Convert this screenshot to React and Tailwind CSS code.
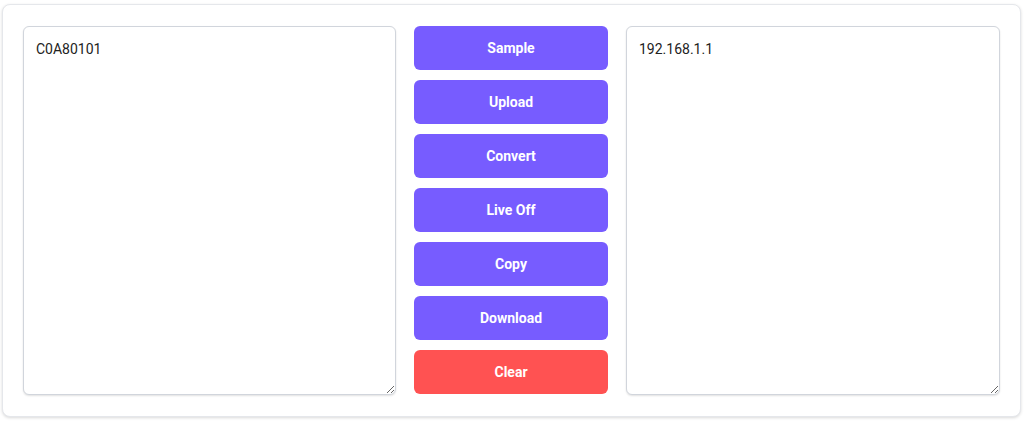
const BUTTONS = [
  { label: 'Sample', tone: 'purple' },
  { label: 'Upload', tone: 'purple' },
  { label: 'Convert', tone: 'purple' },
  { label: 'Live Off', tone: 'purple' },
  { label: 'Copy', tone: 'purple' },
  { label: 'Download', tone: 'purple' },
  { label: 'Clear', tone: 'red' },
];

export default function App() {
  return (
    <div className="w-[1024px] h-[421px] bg-white pt-1 px-0.5" style={{ fontFamily: 'Roboto, "Liberation Sans", sans-serif' }}>
      <div className="h-[413px] w-[1019px] rounded-lg border border-gray-200 bg-white shadow-[0_1px_3px_rgba(0,0,0,0.15)] px-5 pt-[21px] pb-[21px]">
        <div className="grid h-full grid-cols-[373px_194px_1fr] gap-[18px]">
          <textarea
            defaultValue="C0A80101"
            className="h-full w-full resize rounded-md border border-gray-300 bg-white px-3 py-3 text-sm text-[#222] shadow-[0_1px_2px_rgba(0,0,0,0.12)] outline-none"
          />

          <div className="flex flex-col gap-[10px]">
            {BUTTONS.map(b => (
              <button key={b.label}
                className={`h-[44px] rounded-md text-sm font-bold text-white ${b.tone === 'red' ? 'bg-[#ff5252]' : 'bg-[#775cff]'}`}>
                {b.label}
              </button>
            ))}
          </div>

          <textarea
            defaultValue="192.168.1.1"
            className="h-full w-full resize rounded-md border border-gray-300 bg-white px-3 py-3 text-sm text-[#222] shadow-[0_1px_2px_rgba(0,0,0,0.12)] outline-none"
          />
        </div>
      </div>
    </div>
  );
}
